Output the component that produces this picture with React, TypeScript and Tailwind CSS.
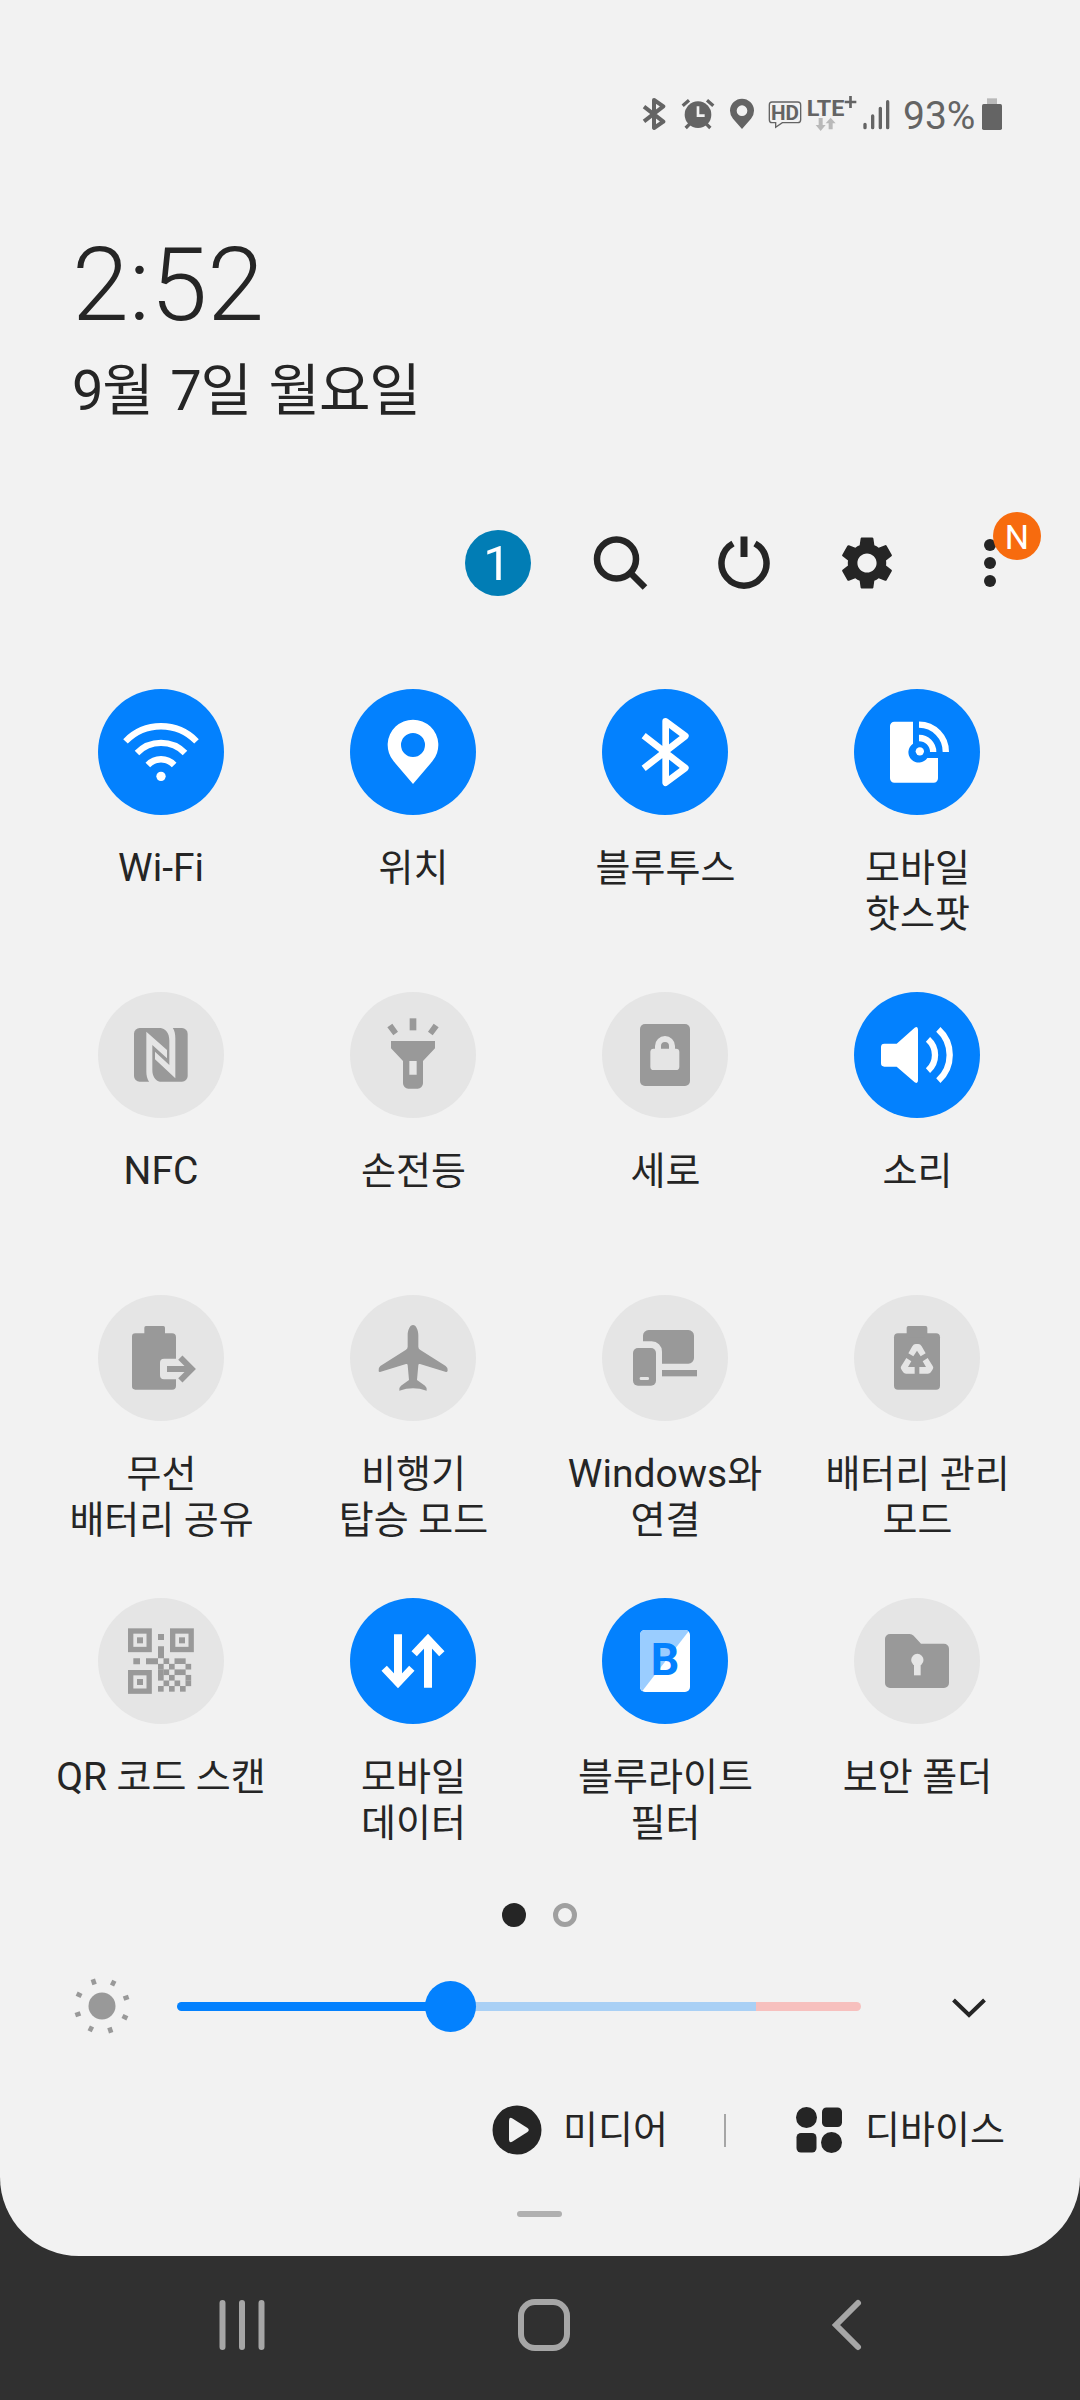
import type { ReactNode } from 'react';
import { MdSettings } from 'react-icons/md';

const cut = 'fill-[#e5e5e5]';

const QR_ROWS = ['.#.##.', '#.#..#', '##.##.', '#.#..#', '.#.#.#', '#.#.#.'];

const Arcs = ({ d, width = 19 }: { d: string; width?: number }) => (
    <path d={d} fill="none" stroke="currentColor" strokeWidth={width} />
);

const WifiIcon = () => (
    <>
        <Arcs d="M-106.5 -32A148 148 0 0 1 106.5 -32M-72 3A101 101 0 0 1 72 3M-39.5 39A54 54 0 0 1 39.5 39" />
        <circle cy="73" r="14" />
    </>
);

const LocationIcon = () => (
    <path
        fillRule="evenodd"
        d="M0 96L-58 28A76 76 0 1 1 58 28ZM0 -57a36 36 0 1 0 0 72a36 36 0 1 0 0 -72Z"
    />
);

const BluetoothIcon = () => (
    <path
        d="M-64 -49L61 48L2 92V-92L61 -48L-64 49"
        fill="none"
        stroke="currentColor"
        strokeWidth="20"
        strokeLinejoin="round"
    />
);

const HotspotIcon = () => (
    <>
        <path d="M-68 -91H-12V-25A31 31 0 1 0 31 18H63V79a13 13 0 0 1 -13 13H-68a13 13 0 0 1 -13 -13V-78a13 13 0 0 1 13 -13Z" />
        <circle cx="8.5" cy="-2" r="12.5" />
        <Arcs d="M6 -42A42 42 0 0 1 48.5 0M6 -82A81 81 0 0 1 86.5 0" />
    </>
);

const NfcIcon = () => (
    <>
        <rect x="-81" y="-81" width="161" height="161" rx="17" />
        <path className={cut} d="M-44 -70L18 -15V10L-26 -30V45C-26 63 -18 77 -1 82H-35C-42 72 -44 60 -44 50Z" />
        <path className={cut} d="M-5 -82H35C41 -73 43 -63 43 -50V70L-18 13V-10L25 30V-43C25 -67 15 -79 -5 -82Z" />
    </>
);

const FlashlightIcon = () => (
    <>
        <rect x="-10" y="-110" width="20" height="36" />
        <path d="M-77 -83L-62 -94L-45 -70L-59 -59ZM77 -83L62 -94L45 -70L59 -59Z" />
        <path
            fillRule="evenodd"
            d="M-66 -42H66V-20L30 18V85a16 16 0 0 1 -16 16H-14a16 16 0 0 1 -16 -16V18L-66 -20ZM-11 18V59H11V18Z"
        />
    </>
);

const PortraitIcon = () => (
    <>
        <rect x="-75" y="-93" width="150" height="186" rx="15" />
        <rect className={cut} x="-44" y="-19" width="87" height="64" rx="10" />
        <path d="M-21 -15V-27A21 21 0 0 1 21 -27V-15" fill="none" stroke="#e5e5e5" strokeWidth="18" />
    </>
);

const SoundIcon = () => (
    <>
        <path d="M-98 -34H-61L-7 -82Q3 -88 3 -76V76Q3 88 -7 82L-61 35H-98Q-108 35 -108 25V-24Q-108 -34 -98 -34Z" />
        <Arcs d="M33 -47A63 63 0 0 1 33 47M64 -77A104 104 0 0 1 64 77" />
    </>
);

const BatteryShareIcon = () => (
    <>
        <path d="M-77 -74H-50V-91q0 -5 5 -5H7q5 0 5 5V-74H33q12 0 12 12V2H9Q-3 2 -3 14V52q0 12 12 12H45V83q0 12 -12 12H-77q-10 0 -10 -10V-64q0 -10 10 -10Z" />
        <Arcs d="M58 -1L92 33L58 67M18 33H90" width={18} />
    </>
);

const AirplaneIcon = () => (
    <path d="M0 -99C9 -99 16 -84 16 -68V-34Q16 -28 21 -25L98 24Q105 29 104 37Q104 43 99 42L21 18Q16 17 16 22L12 66L36 83Q43 89 41 98Q20 91 0 91Q-20 91 -41 98Q-43 89 -36 83L-12 66L-16 22Q-16 17 -21 18L-99 42Q-104 43 -103 37Q-104 29 -98 24L-21 -25Q-16 -28 -16 -34V-68C-16 -84 -9 -99 0 -99Z" />
);

const WindowsIcon = () => (
    <>
        <path d="M-66 -50V-67a17 17 0 0 1 17 -17H70a17 17 0 0 1 17 17V0a17 17 0 0 1 -17 17H-9V-19A31 31 0 0 0 -40 -50Z" />
        <rect x="-9" y="36" width="105" height="19" />
        <rect x="-96" y="-30" width="69" height="113" rx="15" />
        <rect className={cut} x="-76" y="57" width="28" height="9" rx="4" />
    </>
);

const BatteryCareIcon = () => (
    <>
        <rect x="-69" y="-74" width="138" height="169" rx="12" />
        <rect x="-31" y="-96" width="62" height="34" rx="5" />
        <path className={cut} d="M-26 -14L-14 -35Q-10 -42 -4 -42H4Q10 -42 14 -35L26 -14L11 -5L0 -22L-11 -5Z" />
        <path className={cut} d="M-32 0L-17 10L-27 27H-7V47H-33Q-40 47 -44 39L-48 32Q-50 28 -47 24Z" />
        <path className={cut} d="M32 0L17 10L27 27H7V47H33Q40 47 44 39L48 32Q50 28 47 24Z" />
    </>
);

const QrIcon = () => (
    <>
        {[[-99, -98], [27, -98], [-99, 27]].map(([x, y]) => (
            <g key={`${x}${y}`} transform={`translate(${x} ${y})`}>
                <rect x="8" y="8" width="55.5" height="55.5" fill="none" stroke="currentColor" strokeWidth="16" />
                <rect x="27" y="27" width="18" height="18" />
            </g>
        ))}
        <path d="M-9 -81H9V-63H-9ZM-83 -8H-63V10H-83ZM-45 -8H-9V-44H9V-8H-9V10H-45Z" />
        {QR_ROWS.map((row, r) =>
            row.split('').map((c, i) =>
                c === '#' ? (
                    <rect key={`${r}-${i}`} x={-9 + i * 16.5} y={-8 + r * 16.6} width="17" height="17" />
                ) : null
            )
        )}
    </>
);

const DataIcon = () => (
    <>
        <Arcs d="M-45 -80V62M45 80V-62" width={24} />
        <Arcs d="M-86.5 22L-45 66L-3.5 22M86.5 -22L45 -66L3.5 -22" width={22} />
    </>
);

const BlueLightIcon = () => (
    <>
        <rect x="-75" y="-93" width="150" height="186" rx="15" />
        <path
            className="fill-[#9acdff]"
            d="M-60 -93H60Q67 -93 71 -89L-68 90Q-75 86 -75 78V-78Q-75 -93 -60 -93Z"
        />
        <text x="-43" y="42" className="fill-[#0381fe] font-bold text-[134px]">
            B
        </text>
    </>
);

const FolderIcon = () => (
    <>
        <path d="M-81 -81H-22Q-15 -81 -10 -76L12 -52H81a15 15 0 0 1 15 15V66a15 15 0 0 1 -15 15H-81a15 15 0 0 1 -15 -15V-66a15 15 0 0 1 15 -15Z" />
        <circle className={cut} cx="1" cy="-3" r="18.5" />
        <rect className={cut} x="-9" y="0" width="20" height="43" />
    </>
);

type Tile = { label: string[]; icon: ReactNode; on?: boolean };

const TILES: Tile[] = [
    { label: ['Wi-Fi'], icon: <WifiIcon />, on: true },
    { label: ['위치'], icon: <LocationIcon />, on: true },
    { label: ['블루투스'], icon: <BluetoothIcon />, on: true },
    { label: ['모바일', '핫스팟'], icon: <HotspotIcon />, on: true },
    { label: ['NFC'], icon: <NfcIcon /> },
    { label: ['손전등'], icon: <FlashlightIcon /> },
    { label: ['세로'], icon: <PortraitIcon /> },
    { label: ['소리'], icon: <SoundIcon />, on: true },
    { label: ['무선', '배터리 공유'], icon: <BatteryShareIcon /> },
    { label: ['비행기', '탑승 모드'], icon: <AirplaneIcon /> },
    { label: ['Windows와', '연결'], icon: <WindowsIcon /> },
    { label: ['배터리 관리', '모드'], icon: <BatteryCareIcon /> },
    { label: ['QR 코드 스캔'], icon: <QrIcon /> },
    { label: ['모바일', '데이터'], icon: <DataIcon />, on: true },
    { label: ['블루라이트', '필터'], icon: <BlueLightIcon />, on: true },
    { label: ['보안 폴더'], icon: <FolderIcon /> },
];

// Latin runs are set one pixel larger than the Hangul beside them
const LabelLine = ({ text }: { text: string }) => {
    const latin = text.match(/^[A-Za-z-]+/)?.[0] ?? '';
    return (
        <span className={latin ? 'block' : 'block pl-[1px]'}>
            {latin && <span className="text-[39px] leading-[46px]">{latin}</span>}
            {text.slice(latin.length)}
        </span>
    );
};

const QuickTile = ({ label, icon, on }: Tile) => (
    <button className="flex flex-col items-center h-[303px]">
        <span
            className={
                on
                    ? 'size-[126px] rounded-full bg-[#0381fe] text-white'
                    : 'size-[126px] rounded-full bg-[#e5e5e5] text-[#999999]'
            }
        >
            <svg viewBox="-189 -189 378 378" className="size-full" fill="currentColor">
                {icon}
            </svg>
        </span>
        <span className="mt-[30px] text-[38px] leading-[46px] whitespace-nowrap">
            {label.map((line) => (
                <LabelLine key={line} text={line} />
            ))}
        </span>
    </button>
);

const StatusBar = () => (
    <div className="flex items-center justify-end h-[36px] mt-[96px] pr-[78px] text-[#646464]">
        <svg viewBox="66 48 72 108" className="w-[24px] h-[36px]" fill="none" stroke="currentColor" strokeWidth="12" strokeLinejoin="round">
            <path d="M72 80L130 125L102 144V60L130 79L72 124" />
        </svg>
        <svg viewBox="183 48 102 108" className="w-[34px] h-[36px] ml-[15px]" fill="none" stroke="currentColor" strokeWidth="10">
            <circle cx="234" cy="104" r="40" fill="currentColor" stroke="none" />
            <path d="M188 77L207 61M261 61L280 77M197 144L210 131M258 131L271 144" />
            <path d="M234 79V107H254" stroke="#f2f2f2" strokeWidth="8" />
        </svg>
        <svg viewBox="327 48 78 108" className="w-[26px] h-[36px] ml-[14px]" fill="currentColor">
            <path fillRule="evenodd" d="M366 147L339 116A36 36 0 1 1 393 116ZM366 76a16 16 0 1 0 0 32a16 16 0 1 0 0 -32Z" />
        </svg>
        <svg viewBox="444 48 102 108" className="w-[34px] h-[36px] ml-[13px]" fill="currentColor">
            <path
                d="M456 66H533Q542 66 542 75V119Q542 128 533 128H487L467 142V128H456Q448 128 448 119V75Q448 66 456 66Z"
                fill="none"
                stroke="currentColor"
                strokeWidth="4"
            />
            <text x="453" y="119" textLength="84" lengthAdjust="spacingAndGlyphs" className="text-[58px] font-bold">
                HD
            </text>
        </svg>
        <svg viewBox="561 48 150 108" className="w-[50px] h-[36px] ml-[5px]" fill="currentColor">
            <text x="560" y="109" textLength="113" lengthAdjust="spacingAndGlyphs" className="text-[66px] font-bold">
                LTE
            </text>
            <path d="M674 66H709M691.5 48V84" stroke="currentColor" strokeWidth="8" />
            <path className="fill-[#b9b9b9]" d="M596 114H608V135H617L602 153L587 135H596ZM626 148H638V130H647L632 113L617 130H626Z" />
        </svg>
        <svg viewBox="729 48 84 108" className="w-[28px] h-[36px] ml-[6px]" stroke="currentColor" strokeWidth="10" strokeLinecap="round">
            <path d="M735 133V143M758 108V143M781 85V143M803 65V143" />
        </svg>
        <span className="ml-[12px] mt-[4px] w-[72px] text-[39px] leading-[36px] whitespace-nowrap">93%</span>
        <svg viewBox="1086 48 60 108" className="w-[20px] h-[36px] ml-[7px]" fill="currentColor">
            <path className="fill-[#b9b9b9]" d="M1101 55H1131V72H1101Z" />
            <rect x="1086" y="72" width="60" height="78" rx="5" />
        </svg>
    </div>
);

const Actions = () => (
    <div className="flex items-center h-[66px] mt-[101px] pl-[465px]">
        <div className="flex items-center justify-center size-[66px] pr-[2px] rounded-full bg-[#017db5] text-white text-[49px] leading-none">
            1
        </div>
        <svg viewBox="0 0 66 66" className="size-[66px] ml-[57px]" fill="none" stroke="currentColor" strokeWidth="6.5">
            <circle cx="28.5" cy="29" r="19.5" />
            <path d="M42 42.5L57 57.5" />
        </svg>
        <svg viewBox="0 0 66 66" className="size-[66px] ml-[57px]" fill="none" stroke="currentColor" strokeWidth="6.5">
            <path d="M22 13.5A22.5 22.5 0 1 0 44 13.5" />
            <path d="M33 6.5V27" strokeWidth="7" />
        </svg>
        <MdSettings className="size-[64px] ml-[58px]" />
        <div className="relative flex flex-col items-center gap-[6px] w-[12px] ml-[85px]">
            <span className="size-[12px] rounded-full bg-[#252525]" />
            <span className="size-[12px] rounded-full bg-[#252525]" />
            <span className="size-[12px] rounded-full bg-[#252525]" />
            <span className="absolute left-[9px] top-[-27px] flex items-center justify-center size-[48px] pt-[2px] rounded-full bg-[#f76b0e] text-white text-[34px] leading-none">
                N
            </span>
        </div>
    </div>
);

const Brightness = () => (
    <div className="flex items-center h-[54px] mt-[52px]">
        <svg viewBox="-30 -30 60 60" className="size-[60px] ml-[72px]" fill="#999999">
            <circle r="13.5" />
            {[0, 45, 90, 135, 180, 225, 270, 315].map((a) => (
                <rect key={a} x="-2.3" y="-28.2" width="4.6" height="5.4" transform={`rotate(${a - 19})`} />
            ))}
        </svg>
        <div className="relative flex items-center w-[684px] h-[52px] ml-[45px]">
            <div className="flex w-full h-[9px] rounded-full overflow-hidden">
                <div className="w-[274px] bg-[#0381fe]" />
                <div className="w-[305px] bg-[#a9d0f5]" />
                <div className="flex-1 bg-[#f7c0be]" />
            </div>
            <div className="absolute left-[248px] top-[1px] size-[51px] rounded-full bg-[#0381fe]" />
        </div>
        <svg viewBox="0 0 40 40" className="size-[40px] ml-[88px]" fill="none" stroke="currentColor" strokeWidth="4">
            <path d="M4.5 14L20 29L35.5 14" />
        </svg>
    </div>
);

const Shortcuts = () => (
    <div className="flex items-center h-[50px] mt-[72px] pl-[492px] text-[38px] leading-[46px] whitespace-nowrap">
        <svg viewBox="-25 -25 50 50" className="size-[50px]">
            <circle r="24.5" fill="#252525" />
            <path d="M-8 -9.5Q-8 -13.5 -4.5 -11.5L10.5 -2Q13 0 10.5 2L-4.5 11.5Q-8 13.5 -8 9.5Z" fill="#f2f2f2" />
        </svg>
        <span className="ml-[21px] w-[104px]">미디어</span>
        <span className="w-[2px] h-[33px] ml-[57px] bg-[#a6a6a6]" />
        <svg viewBox="0 0 46 46" className="size-[46px] ml-[70px]" fill="#252525">
            <circle cx="10.5" cy="10.5" r="10.5" />
            <rect x="26" y="0.5" width="20" height="19.5" rx="4.5" />
            <rect x="0.5" y="26" width="20" height="19.5" rx="4.5" />
            <circle cx="35.5" cy="35.5" r="10.5" />
        </svg>
        <span className="ml-[23px]">디바이스</span>
    </div>
);

const NavBar = () => (
    <div className="flex items-center h-[138px] text-[#a6a6a6]">
        <svg viewBox="0 0 60 60" className="size-[60px] ml-[212px]" stroke="currentColor" strokeWidth="6" strokeLinecap="round">
            <path d="M10.5 8V52M30 8V52M49.5 8V52" />
        </svg>
        <svg viewBox="0 0 60 60" className="size-[60px] ml-[242px]" fill="none" stroke="currentColor" strokeWidth="6">
            <rect x="7" y="7" width="46" height="46" rx="14" />
        </svg>
        <svg viewBox="0 0 60 60" className="size-[60px] ml-[242px]" fill="none" stroke="currentColor" strokeWidth="6" strokeLinecap="round">
            <path d="M42 8L20 30L42 52" />
        </svg>
    </div>
);

export default function App() {
    return (
        <div className="w-[1080px] h-[2400px] overflow-hidden bg-[#303030] font-['Roboto','Noto_Sans_CJK_KR',sans-serif] text-[#252525]">
            <div className="flex flex-col h-[2256px] rounded-b-[79px] bg-[#f2f2f2]">
                <StatusBar />
                <div className="mt-[93px] ml-[72px] h-[120px] text-[102.5px] leading-[120px] font-light">2:52</div>
                <div className="mt-[8px] ml-[72px] h-[76px] text-[56px] leading-[76px] tracking-[-1.2px] [word-spacing:5px] whitespace-nowrap">
                    9월 7일 월요일
                </div>
                <Actions />
                <div className="grid grid-cols-4 w-[1008px] ml-[35px] mt-[93px]">
                    {TILES.map((tile) => (
                        <QuickTile key={tile.label.join(' ')} {...tile} />
                    ))}
                </div>
                <div className="flex gap-[27px] mt-[2px] pl-[502px]">
                    <span className="size-[24px] rounded-full bg-[#252525]" />
                    <span className="size-[24px] rounded-full border-[5px] border-[#a0a0a0]" />
                </div>
                <Brightness />
                <Shortcuts />
                <div className="w-[45px] h-[6px] mt-[56px] ml-[517px] rounded-full bg-[#b0b0b0]" />
            </div>
            <NavBar />
        </div>
    );
}
